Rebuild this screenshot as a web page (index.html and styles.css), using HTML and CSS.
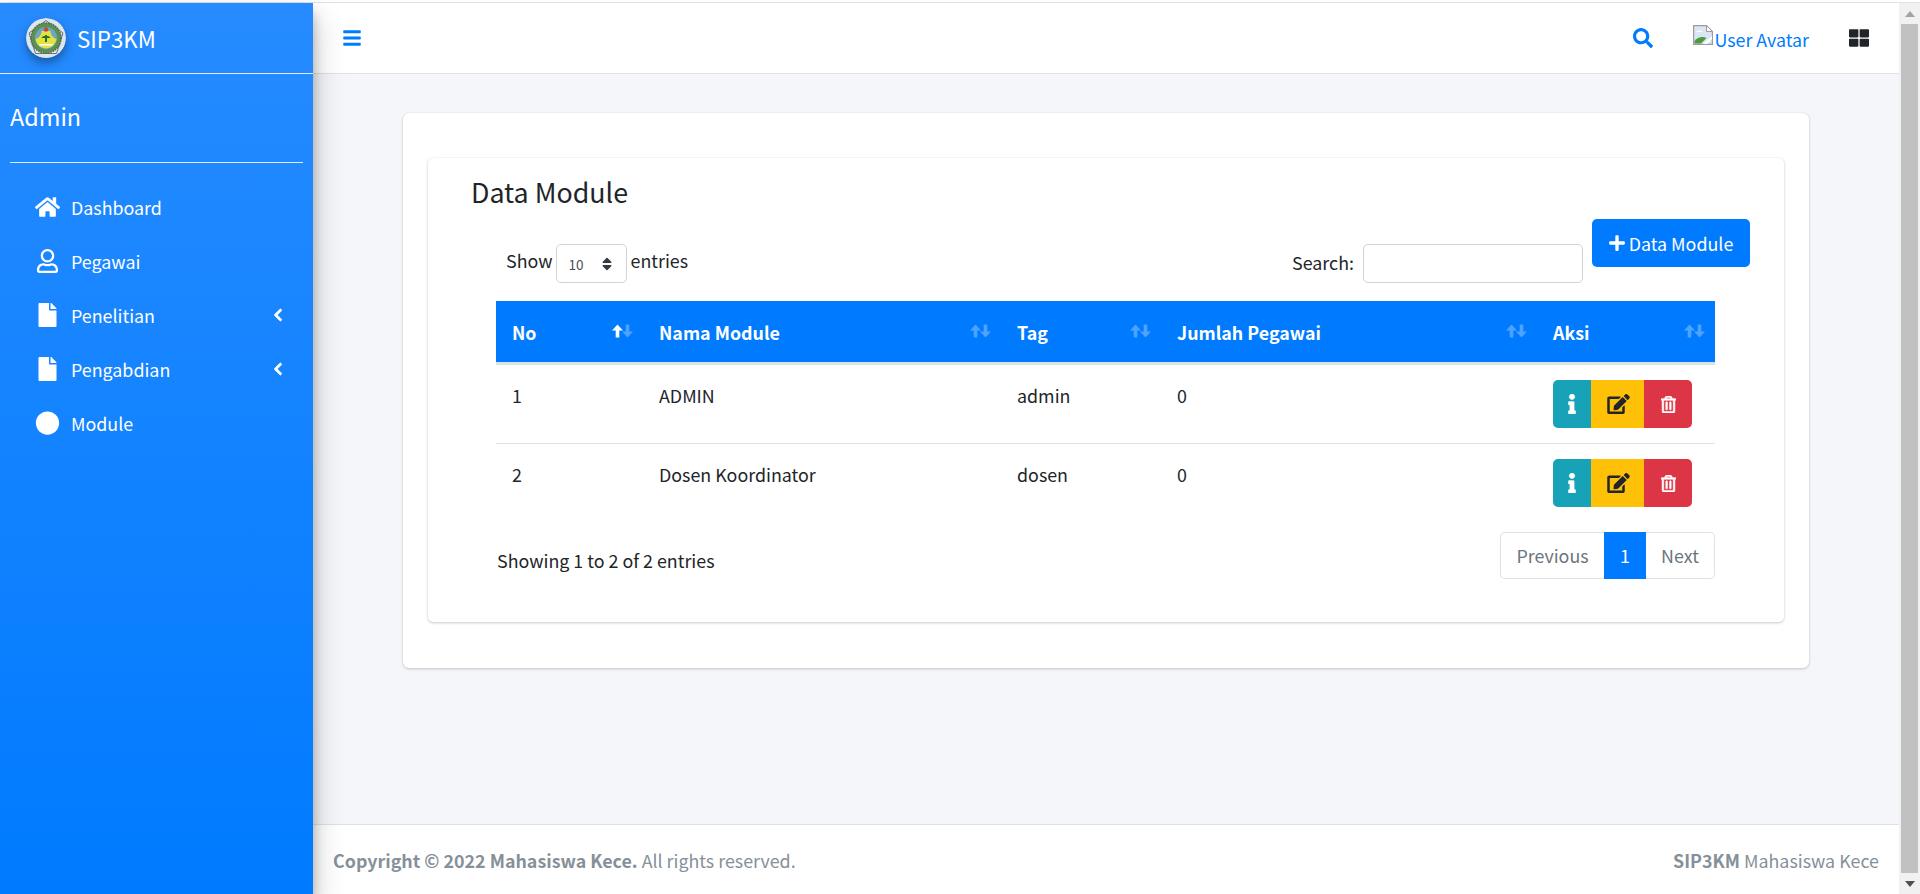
FILE: index.html
```html
<!DOCTYPE html>
<html lang="id">
<head>
    <meta charset="UTF-8">
    <meta name="viewport" content="width=device-width, initial-scale=1.0">
    <title>SIP3KM</title>
    <link rel="stylesheet" href="styles.css">
</head>
<body>
    <div class="app">
        <aside class="sidebar">
            <div class="brand">
                <svg class="brand-logo" viewBox="0 0 40 40">
                    <circle cx="20" cy="20" r="20" fill="#dfe5ea"/>
                    <path d="M20 2.5 37 15 30.500 35.500H9.500L3 15Z" fill="none" stroke="#6d7377" stroke-width="1"/>
                    <circle cx="20" cy="20" r="15" fill="#5f8f52"/>
                    <circle cx="20" cy="20" r="15" fill="none" stroke="#3f6f45" stroke-width="1.500" stroke-dasharray="1.500 1"/>
                    <circle cx="20" cy="20" r="11" fill="#6da6c2"/>
                    <path d="M9.500 21c4-1 6-5 6-8h9c0 3 2 7 6 8-1 6-6 9.500-10.500 9.500S10.500 27 9.500 21Z" fill="#e3e23f"/>
                    <circle cx="20" cy="11.500" r="2.200" fill="#c2483e"/>
                    <path d="M19 17h2v7h-2ZM15.500 20c1-3 8-3 9 0Z" fill="#2f6b35"/>
                    <path d="M13.500 26h13v1.500h-13Z" fill="#ffffff"/>
                </svg>
                <span class="brand-text">SIP3KM</span>
            </div>
            <div class="user-panel">Admin</div>
            <nav class="nav">
                <a class="nav-item">
                    <svg class="nav-icon" viewBox="0 0 576 512"><path d="M280.37 148.26L96 300.11V464a16 16 0 0 0 16 16l112.06-.29a16 16 0 0 0 15.92-16V368a16 16 0 0 1 16-16h64a16 16 0 0 1 16 16v95.64a16 16 0 0 0 16 16.05L464 480a16 16 0 0 0 16-16V300L295.67 148.26a12.19 12.19 0 0 0-15.3 0zM571.6 251.47L488 182.56V44.05a12 12 0 0 0-12-12h-56a12 12 0 0 0-12 12v72.61L318.47 43a48 48 0 0 0-61 0L4.34 251.47a12 12 0 0 0-1.6 16.9l25.5 31A12 12 0 0 0 45.15 301l235.22-193.74a12.19 12.19 0 0 1 15.3 0L530.9 301a12 12 0 0 0 16.9-1.6l25.5-31a12 12 0 0 0-1.7-16.93z"/></svg>
                    <span class="nav-label">Dashboard</span>
                </a>
                <a class="nav-item">
                    <svg class="nav-icon" viewBox="0 0 448 512"><path d="M313.6 304c-28.7 0-42.5 16-89.6 16-47.1 0-60.8-16-89.6-16C60.2 304 0 364.2 0 438.4V464c0 26.5 21.5 48 48 48h352c26.5 0 48-21.5 48-48v-25.6c0-74.2-60.2-134.4-134.4-134.4zM400 464H48v-25.6c0-47.6 38.8-86.4 86.4-86.4 14.6 0 38.3 16 89.6 16 51.7 0 74.9-16 89.6-16 47.6 0 86.4 38.8 86.4 86.4V464zM224 288c79.5 0 144-64.5 144-144S303.5 0 224 0 80 64.5 80 144s64.5 144 144 144zm0-240c52.9 0 96 43.1 96 96s-43.1 96-96 96-96-43.1-96-96 43.1-96 96-96z"/></svg>
                    <span class="nav-label">Pegawai</span>
                </a>
                <a class="nav-item">
                    <svg class="nav-icon" viewBox="0 0 384 512"><path d="M224 136V0H24C10.7 0 0 10.7 0 24v464c0 13.3 10.7 24 24 24h336c13.300 0 24-10.700 24-24V160H248c-13.200 0-24-10.800-24-24zm160-14.100v6.100H256V0h6.100c6.400 0 12.500 2.500 17 7l97.900 98c4.500 4.500 7 10.600 7 16.900z"/></svg>
                    <span class="nav-label">Penelitian</span>
                    <svg class="nav-arrow" viewBox="0 0 320 512"><path d="M34.52 239.03L228.87 44.69c9.37-9.37 24.57-9.37 33.94 0l22.67 22.67c9.36 9.36 9.37 24.52.04 33.9L131.49 256l154.02 154.75c9.34 9.38 9.32 24.54-.04 33.9l-22.67 22.67c-9.37 9.37-24.57 9.37-33.94 0L34.52 272.97c-9.37-9.37-9.37-24.57 0-33.94z"/></svg>
                </a>
                <a class="nav-item">
                    <svg class="nav-icon" viewBox="0 0 384 512"><path d="M224 136V0H24C10.7 0 0 10.7 0 24v464c0 13.3 10.7 24 24 24h336c13.300 0 24-10.700 24-24V160H248c-13.200 0-24-10.800-24-24zm160-14.100v6.100H256V0h6.100c6.400 0 12.500 2.500 17 7l97.900 98c4.500 4.500 7 10.600 7 16.900z"/></svg>
                    <span class="nav-label">Pengabdian</span>
                    <svg class="nav-arrow" viewBox="0 0 320 512"><path d="M34.52 239.03L228.87 44.69c9.37-9.37 24.57-9.37 33.94 0l22.67 22.67c9.36 9.36 9.37 24.52.04 33.9L131.49 256l154.02 154.75c9.34 9.38 9.32 24.54-.04 33.9l-22.67 22.67c-9.37 9.37-24.57 9.37-33.94 0L34.52 272.97c-9.37-9.37-9.37-24.57 0-33.94z"/></svg>
                </a>
                <a class="nav-item">
                    <svg class="nav-icon" viewBox="0 0 512 512"><circle cx="256" cy="256" r="248"/></svg>
                    <span class="nav-label">Module</span>
                </a>
            </nav>
        </aside>

        <div class="main">
            <header class="topbar">
                <svg class="top-bars" viewBox="0 0 448 512"><path d="M16 132h416c8.837 0 16-7.163 16-16V76c0-8.837-7.163-16-16-16H16C7.163 60 0 67.163 0 76v40c0 8.837 7.163 16 16 16zm0 160h416c8.837 0 16-7.163 16-16v-40c0-8.837-7.163-16-16-16H16c-8.837 0-16 7.163-16 16v40c0 8.837 7.163 16 16 16zm0 160h416c8.837 0 16-7.163 16-16v-40c0-8.837-7.163-16-16-16H16c-8.837 0-16 7.163-16 16v40c0 8.837 7.163 16 16 16z"/></svg>
                <div class="top-right">
                    <svg class="top-search" viewBox="0 0 512 512"><path d="M505 442.7L405.3 343c-4.500-4.500-10.600-7-17-7H372c27.600-35.300 44-79.700 44-128C416 93.100 322.900 0 208 0S0 93.100 0 208s93.100 208 208 208c48.300 0 92.700-16.400 128-44v16.300c0 6.400 2.500 12.500 7 17l99.700 99.700c9.400 9.400 24.600 9.400 33.900 0l28.300-28.300c9.400-9.400 9.400-24.600.1-34zM208 336c-70.700 0-128-57.200-128-128 0-70.700 57.200-128 128-128 70.700 0 128 57.200 128 128 0 70.700-57.200 128-128 128z"/></svg>
                    <a class="avatar">
                        <svg class="avatar-broken" viewBox="0 0 20 20">
                            <path d="M.6.6H13.500L19.400 6.500V19.400H.6Z" fill="#dbe6f4" stroke="#9b9b9b" stroke-width="1.200"/>
                            <path d="M13.500.6V6.500H19.400Z" fill="#ffffff" stroke="#9b9b9b" stroke-width="1"/>
                            <path d="M3 7c2-2 5-2 7 0H3Z" fill="#ffffff"/>
                            <path d="M1.500 18.500V16c3-4 8-5 12-3L8 18.500Z" fill="#4f9a3a"/>
                            <path d="M10 19 19 11V14L14 19Z" fill="#ffffff"/>
                        </svg>
                        <span>User Avatar</span>
                    </a>
                    <svg class="top-grid" viewBox="0 0 512 512"><path d="M296 32h192c13.255 0 24 10.745 24 24v160c0 13.255-10.745 24-24 24H296c-13.255 0-24-10.745-24-24V56c0-13.255 10.745-24 24-24zm-80 0H24C10.745 32 0 42.745 0 56v160c0 13.255 10.745 24 24 24h192c13.255 0 24-10.745 24-24V56c0-13.255-10.745-24-24-24zM0 296v160c0 13.255 10.745 24 24 24h192c13.255 0 24-10.745 24-24V296c0-13.255-10.745-24-24-24H24c-13.255 0-24 10.745-24 24zm296 184h192c13.255 0 24-10.745 24-24V296c0-13.255-10.745-24-24-24H296c-13.255 0-24 10.745-24 24v160c0 13.255 10.745 24 24 24z"/></svg>
                </div>
            </header>

            <main class="content">
                <section class="outer-card">
                    <div class="inner-card">
                        <h1 class="card-title">Data Module</h1>

                        <div class="toolbar">
                            <div class="length">
                                <span class="length-text">Show</span>
                                <div class="length-select">
                                    <span>10</span>
                                    <svg class="length-caret" viewBox="0 0 320 512"><path d="M41 288h238c21.400 0 32.100 25.900 17 41L177 448c-9.400 9.400-24.600 9.400-33.900 0L24 329c-15.100-15.100-4.400-41 17-41zm255-105L177 64c-9.400-9.400-24.600-9.400-33.900 0L24 183c-15.100 15.100-4.400 41 17 41h238c21.400 0 32.100-25.900 17-41z"/></svg>
                                </div>
                                <span class="length-text">entries</span>
                            </div>
                            <div class="search">
                                <label for="cari">Search:</label>
                                <input id="cari" class="search-input" type="search">
                            </div>
                            <button class="btn-add">
                                <svg class="btn-add-icon" viewBox="0 0 448 512"><path d="M416 208H272V64c0-17.670-14.330-32-32-32h-32c-17.670 0-32 14.330-32 32v144H32c-17.670 0-32 14.330-32 32v32c0 17.670 14.330 32 32 32h144v144c0 17.670 14.330 32 32 32h32c17.670 0 32-14.330 32-32V304h144c17.670 0 32-14.330 32-32v-32c0-17.670-14.330-32-32-32z"/></svg>
                                Data Module
                            </button>
                        </div>

                        <table class="data-table">
                            <colgroup>
                                <col class="col-no">
                                <col class="col-nama">
                                <col class="col-tag">
                                <col class="col-jumlah">
                                <col class="col-aksi">
                            </colgroup>
                            <thead>
                                <tr>
                                    <th><div class="th-inner">No <span class="sort sort-asc"><svg viewBox="0 0 21 14"><path class="up" d="M5.500.5 11 6.500H7.300V13.500H3.700V6.500H0Z"/><path class="down" d="M15.500 13.500 10 7.500H13.700V.5H17.300V7.500H21Z"/></svg></span></div></th>
                                    <th><div class="th-inner">Nama Module <span class="sort"><svg viewBox="0 0 21 14"><path class="up" d="M5.500.5 11 6.500H7.300V13.500H3.700V6.500H0Z"/><path class="down" d="M15.500 13.500 10 7.500H13.700V.5H17.300V7.500H21Z"/></svg></span></div></th>
                                    <th><div class="th-inner">Tag <span class="sort"><svg viewBox="0 0 21 14"><path class="up" d="M5.500.5 11 6.500H7.300V13.500H3.700V6.500H0Z"/><path class="down" d="M15.500 13.500 10 7.500H13.700V.5H17.300V7.500H21Z"/></svg></span></div></th>
                                    <th><div class="th-inner">Jumlah Pegawai <span class="sort"><svg viewBox="0 0 21 14"><path class="up" d="M5.500.5 11 6.500H7.300V13.500H3.700V6.500H0Z"/><path class="down" d="M15.500 13.500 10 7.500H13.700V.5H17.300V7.500H21Z"/></svg></span></div></th>
                                    <th><div class="th-inner">Aksi <span class="sort"><svg viewBox="0 0 21 14"><path class="up" d="M5.500.5 11 6.500H7.300V13.500H3.700V6.500H0Z"/><path class="down" d="M15.500 13.500 10 7.500H13.700V.5H17.300V7.500H21Z"/></svg></span></div></th>
                                </tr>
                            </thead>
                            <tbody>
                                <tr>
                                    <td>1</td>
                                    <td>ADMIN</td>
                                    <td>admin</td>
                                    <td>0</td>
                                    <td>
                                        <div class="btn-group">
                                            <button class="btn btn-info"><svg class="icon-info" viewBox="0 0 192 512"><path d="M20 424.229h20V279.771H20c-11.046 0-20-8.954-20-20V212c0-11.046 8.954-20 20-20h112c11.046 0 20 8.954 20 20v212.229h20c11.046 0 20 8.954 20 20V492c0 11.046-8.954 20-20 20H20c-11.046 0-20-8.954-20-20v-47.771c0-11.046 8.954-20 20-20zM96 0C56.235 0 24 32.235 24 72s32.235 72 72 72 72-32.235 72-72S135.764 0 96 0z"/></svg></button>
                                            <button class="btn btn-warning"><svg class="icon-edit" viewBox="0 0 576 512"><path d="M402.600 83.200l90.200 90.200c3.800 3.800 3.800 10 0 13.800L274.400 405.600l-92.800 10.300c-12.400 1.400-22.900-9.100-21.500-21.500l10.300-92.800L388.800 83.200c3.800-3.800 10-3.800 13.800 0zm162-22.900l-48.800-48.800c-15.200-15.200-39.900-15.200-55.200 0l-35.400 35.400c-3.800 3.800-3.800 10 0 13.800l90.200 90.200c3.800 3.800 10 3.800 13.800 0l35.400-35.400c15.200-15.300 15.200-40 0-55.200zM384 346.200V448H64V128h229.800c3.200 0 6.200-1.300 8.500-3.500l40-40c7.600-7.600 2.200-20.500-8.500-20.500H48C21.500 64 0 85.500 0 112v352c0 26.500 21.500 48 48 48h352c26.500 0 48-21.500 48-48V306.200c0-10.700-12.900-16-20.500-8.500l-40 40c-2.200 2.300-3.500 5.300-3.500 8.500z"/></svg></button>
                                            <button class="btn btn-danger"><svg class="icon-trash" viewBox="0 0 448 512"><path d="M268 416h24a12 12 0 0 0 12-12V188a12 12 0 0 0-12-12h-24a12 12 0 0 0-12 12v216a12 12 0 0 0 12 12zM432 80h-82.410l-34-56.700A48 48 0 0 0 274.410 0H173.590a48 48 0 0 0-41.160 23.300L98.410 80H16A16 16 0 0 0 0 96v16a16 16 0 0 0 16 16h16v336a48 48 0 0 0 48 48h288a48 48 0 0 0 48-48V128h16a16 16 0 0 0 16-16V96a16 16 0 0 0-16-16zM171.840 50.910A6 6 0 0 1 177 48h94a6 6 0 0 1 5.150 2.910L293.610 80H154.390zM368 464H80V128h288zm-212-48h24a12 12 0 0 0 12-12V188a12 12 0 0 0-12-12h-24a12 12 0 0 0-12 12v216a12 12 0 0 0 12 12z"/></svg></button>
                                        </div>
                                    </td>
                                </tr>
                                <tr>
                                    <td>2</td>
                                    <td>Dosen Koordinator</td>
                                    <td>dosen</td>
                                    <td>0</td>
                                    <td>
                                        <div class="btn-group">
                                            <button class="btn btn-info"><svg class="icon-info" viewBox="0 0 192 512"><path d="M20 424.229h20V279.771H20c-11.046 0-20-8.954-20-20V212c0-11.046 8.954-20 20-20h112c11.046 0 20 8.954 20 20v212.229h20c11.046 0 20 8.954 20 20V492c0 11.046-8.954 20-20 20H20c-11.046 0-20-8.954-20-20v-47.771c0-11.046 8.954-20 20-20zM96 0C56.235 0 24 32.235 24 72s32.235 72 72 72 72-32.235 72-72S135.764 0 96 0z"/></svg></button>
                                            <button class="btn btn-warning"><svg class="icon-edit" viewBox="0 0 576 512"><path d="M402.600 83.200l90.200 90.200c3.800 3.800 3.800 10 0 13.800L274.400 405.600l-92.800 10.300c-12.400 1.400-22.900-9.100-21.500-21.500l10.300-92.800L388.800 83.200c3.800-3.800 10-3.800 13.800 0zm162-22.900l-48.800-48.800c-15.200-15.200-39.900-15.200-55.200 0l-35.400 35.400c-3.800 3.800-3.800 10 0 13.800l90.200 90.200c3.800 3.800 10 3.800 13.800 0l35.400-35.400c15.200-15.300 15.200-40 0-55.200zM384 346.200V448H64V128h229.800c3.200 0 6.200-1.300 8.500-3.500l40-40c7.600-7.600 2.200-20.500-8.500-20.500H48C21.500 64 0 85.500 0 112v352c0 26.500 21.500 48 48 48h352c26.500 0 48-21.500 48-48V306.200c0-10.700-12.900-16-20.500-8.500l-40 40c-2.200 2.300-3.500 5.300-3.500 8.500z"/></svg></button>
                                            <button class="btn btn-danger"><svg class="icon-trash" viewBox="0 0 448 512"><path d="M268 416h24a12 12 0 0 0 12-12V188a12 12 0 0 0-12-12h-24a12 12 0 0 0-12 12v216a12 12 0 0 0 12 12zM432 80h-82.410l-34-56.700A48 48 0 0 0 274.410 0H173.590a48 48 0 0 0-41.160 23.300L98.410 80H16A16 16 0 0 0 0 96v16a16 16 0 0 0 16 16h16v336a48 48 0 0 0 48 48h288a48 48 0 0 0 48-48V128h16a16 16 0 0 0 16-16V96a16 16 0 0 0-16-16zM171.840 50.910A6 6 0 0 1 177 48h94a6 6 0 0 1 5.150 2.910L293.610 80H154.390zM368 464H80V128h288zm-212-48h24a12 12 0 0 0 12-12V188a12 12 0 0 0-12-12h-24a12 12 0 0 0-12 12v216a12 12 0 0 0 12 12z"/></svg></button>
                                        </div>
                                    </td>
                                </tr>
                            </tbody>
                        </table>

                        <div class="table-foot">
                            <div class="table-info">Showing 1 to 2 of 2 entries</div>
                            <ul class="pagination">
                                <li class="page page-prev">Previous</li>
                                <li class="page page-active">1</li>
                                <li class="page page-next">Next</li>
                            </ul>
                        </div>
                    </div>
                </section>
            </main>

            <footer class="footer">
                <div><strong>Copyright &copy; 2022 Mahasiswa Kece.</strong> All rights reserved.</div>
                <div><strong>SIP3KM</strong> Mahasiswa Kece</div>
            </footer>
        </div>

        <div class="scrollbar">
            <div class="scroll-btn"><span class="scroll-up"></span></div>
            <div class="scroll-thumb"></div>
            <div class="scroll-btn"><span class="scroll-down"></span></div>
        </div>
    </div>
</body>
</html>
```
FILE: styles.css
```css
* {
    margin: 0;
    padding: 0;
    box-sizing: border-box;
}

html, body {
    height: 894px;
    overflow: hidden;
}

body {
    padding-top: 2px;
    background-color: white;
    font-family: "Noto Sans CJK SC", "Noto Sans", sans-serif;
    font-size: 17.85px;
    line-height: 30px;
    color: #212529;
}

.app {
    display: flex;
    height: 892px;
    border-top: 1px solid #dee2e6;
}

/* sidebar */
.sidebar {
    position: relative;
    z-index: 2;
    flex: 0 0 313px;
    background: linear-gradient(180deg, #268bff, #007bff);
    box-shadow: 0 14px 28px rgba(0, 0, 0, 0.25), 0 10px 10px rgba(0, 0, 0, 0.22);
    color: white;
}

.brand {
    display: flex;
    align-items: center;
    height: 71px;
    padding: 0 0 1px 26px;
    border-bottom: 1px solid rgba(255, 255, 255, 0.85);
}

.brand-logo {
    width: 40px;
    height: 40px;
    border-radius: 50%;
    box-shadow: 0 5px 10px rgba(0, 0, 0, 0.35);
}

.brand-text {
    margin-left: 11px;
    font-size: 22.3px;
}

.user-panel {
    height: 89px;
    margin: 0 10px;
    padding-top: 27px;
    border-bottom: 1px solid rgba(255, 255, 255, 0.85);
    font-size: 23.4px;
}

.nav {
    padding-top: 17px;
}

.nav-item {
    display: flex;
    align-items: center;
    height: 54px;
    padding: 0 30px 0 35px;
}

.nav-icon {
    flex: 0 0 25px;
    height: 24px;
    fill: white;
}

.nav-label {
    flex: 1;
    margin-left: 11px;
}

.nav-arrow {
    width: 10px;
    height: 14px;
    fill: white;
    stroke: white;
    stroke-width: 30;
}

/* top bar */
.main {
    flex: 1;
    display: flex;
    flex-direction: column;
    min-width: 0;
    background-color: #f4f6f9;
}

.topbar {
    display: flex;
    align-items: center;
    justify-content: space-between;
    flex: 0 0 71px;
    padding: 0 30px;
    background-color: white;
    border-bottom: 1px solid #dee2e6;
}

.top-bars {
    width: 18px;
    height: 20px;
    fill: #007bff;
}

.top-right {
    display: flex;
    align-items: center;
}

.top-search {
    width: 20px;
    height: 20px;
    fill: #007bff;
}

.avatar {
    display: flex;
    margin-left: 40px;
    color: #007bff;
}

.avatar-broken {
    width: 20px;
    height: 20px;
    margin-top: 3px;
}

.avatar span {
    margin: 2px 0 0 1px;
}

.top-grid {
    width: 20px;
    height: 20px;
    margin-left: 40px;
    fill: #212529;
}

/* content */
.content {
    flex: 1;
    padding: 39px 90px 0;
}

.outer-card {
    padding: 45px 25px 46px;
    background-color: white;
    border-radius: 6px;
    box-shadow: 0 0 1px rgba(0, 0, 0, 0.125), 0 1px 3px rgba(0, 0, 0, 0.2);
}

.inner-card {
    height: 464px;
    padding: 14px 34px 0 44px;
    background-color: white;
    border-radius: 5px;
    box-shadow: 0 0 1px rgba(0, 0, 0, 0.125), 0 1px 3px rgba(0, 0, 0, 0.2);
}

.card-title {
    margin-left: -1px;
    font-size: 26.8px;
    line-height: 40px;
    font-weight: 400;
}

.toolbar {
    display: flex;
    align-items: flex-start;
    margin-top: 7px;
    padding-left: 34px;
}

.length {
    display: flex;
    margin-top: 25px;
    flex: 1;
}

.length-text {
    margin: 1px 4px 0;
}

.length-text:first-child {
    margin: 1px 3px 0 0;
}

.length-select {
    display: flex;
    align-items: center;
    justify-content: space-between;
    width: 71px;
    height: 39px;
    padding: 0 14px 0 12px;
    border: 1px solid #ced4da;
    border-radius: 5px;
    font-size: 13.5px;
    color: #495057;
}

.length-caret {
    width: 10px;
    height: 16px;
    fill: #343a40;
}

.search {
    display: flex;
    align-items: center;
    margin-top: 25px;
}

.search label {
    margin: -3px 9px 0 0;
}

.search-input {
    width: 220px;
    height: 39px;
    border: 1px solid #ced4da;
    border-radius: 5px;
    outline: none;
}

.btn-add {
    display: flex;
    align-items: center;
    justify-content: center;
    gap: 4px;
    width: 158px;
    height: 48px;
    margin-left: 9px;
    padding-bottom: 1px;
    background-color: #007bff;
    border: none;
    border-radius: 5px;
    font: inherit;
    color: white;
}

.btn-add-icon {
    width: 16px;
    height: 18px;
    fill: white;
}

/* tabel */
.data-table {
    width: 1219px;
    margin: 18px 0 0 24px;
    table-layout: fixed;
    border-collapse: separate;
    border-spacing: 0;
}

.col-no { width: 147px; }
.col-nama { width: 358px; }
.col-tag { width: 160px; }
.col-jumlah { width: 376px; }
.col-aksi { width: 178px; }

.data-table th {
    height: 64px;
    padding: 1px 10px 0 16px;
    background-color: #007bff;
    border-bottom: 3px solid #dee2e6;
    font-weight: 700;
    text-align: left;
    color: white;
}

.th-inner {
    display: flex;
    align-items: center;
    justify-content: space-between;
}

.sort {
    display: flex;
}

.sort svg {
    width: 21px;
    height: 14px;
    fill: white;
    margin-top: -2px;
}

.sort .up,
.sort .down {
    opacity: 0.3;
}

.sort-asc .up {
    opacity: 1;
}

.data-table td {
    height: 79px;
    padding: 15px 16px 0;
    vertical-align: top;
    border-bottom: 1px solid #dee2e6;
}

.data-table tbody tr:last-child td {
    height: 78px;
    border-bottom: none;
}

.btn-group {
    display: flex;
}

.btn {
    display: flex;
    align-items: center;
    justify-content: center;
    height: 48px;
    border: none;
}

.btn-info {
    width: 38px;
    background-color: #17a2b8;
    border-radius: 5px 0 0 5px;
}

.btn-warning {
    width: 53px;
    background-color: #ffc107;
}

.btn-danger {
    width: 48px;
    background-color: #dc3545;
    border-radius: 0 5px 5px 0;
}

.icon-info {
    width: 8px;
    height: 20px;
    fill: white;
    stroke: white;
    stroke-width: 10;
}

.icon-edit {
    width: 23px;
    height: 20px;
    margin-left: 2px;
    fill: #212529;
}

.icon-trash {
    width: 15px;
    height: 17px;
    fill: white;
    stroke: white;
    stroke-width: 18;
}

.table-foot {
    display: flex;
    justify-content: space-between;
    width: 1219px;
    margin: 10px 0 0 24px;
}

.table-info {
    margin-top: 13px;
    padding-left: 1px;
}

.pagination {
    display: flex;
    height: 47px;
    list-style: none;
}

.page {
    display: flex;
    align-items: center;
    justify-content: center;
    padding-bottom: 1px;
    border: 1px solid #dee2e6;
    color: #6c757d;
}

.page-prev {
    width: 104px;
    border-right: none;
    border-radius: 5px 0 0 5px;
}

.page-active {
    width: 42px;
    background-color: #007bff;
    border-color: #007bff;
    color: white;
}

.page-next {
    width: 69px;
    border-left: none;
    border-radius: 0 5px 5px 0;
}

/* footer */
.footer {
    display: flex;
    align-items: center;
    justify-content: space-between;
    flex: 0 0 70px;
    padding: 0 20px;
    background-color: white;
    border-top: 1px solid #dee2e6;
    color: #869099;
}

/* scrollbar */
.scrollbar {
    display: flex;
    flex-direction: column;
    flex: 0 0 21px;
    padding: 0 2px;
    background-color: #f1f1f1;
}

.scroll-btn {
    display: flex;
    align-items: center;
    justify-content: center;
    flex: 0 0 21px;
}

.scroll-up {
    border: 5px solid transparent;
    border-top: none;
    border-bottom: 6px solid #a3a3a3;
}

.scroll-down {
    border: 5px solid transparent;
    border-bottom: none;
    border-top: 6px solid #505050;
}

.scroll-thumb {
    flex: 1;
    background-color: #c1c1c1;
}
```
